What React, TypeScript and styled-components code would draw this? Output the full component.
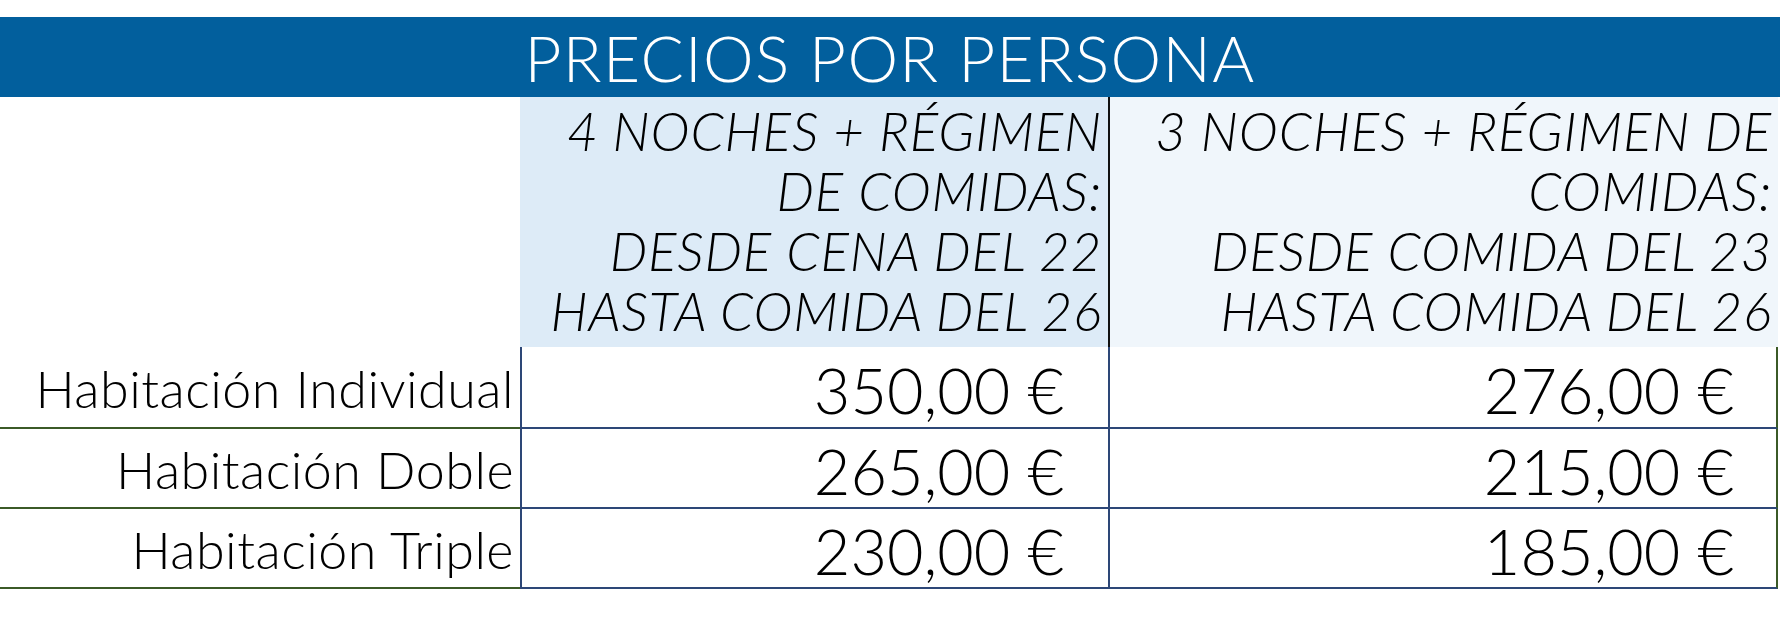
import React from 'react';
import styled, { createGlobalStyle } from 'styled-components';

const GlobalStyle = createGlobalStyle`
  html, body {
    margin: 0;
    padding: 0;
    background: #ffffff;
  }
  body {
    font-family: 'Lato', 'Open Sans', sans-serif;
    color: #000000;
  }
`;

const NAVY = '#2d4777';
const GREEN = '#3b5a27';

const Page = styled.div`
  width: 1780px;
  padding-top: 17px;
`;

const TitleBar = styled.div`
  height: 80px;
  background: #025f9d;
  color: #ffffff;
  display: flex;
  align-items: center;
  justify-content: center;
  font-family: 'Lato', sans-serif;
  font-weight: 300;
  font-size: 64px;
  letter-spacing: 1.3px;
  line-height: 1;
  padding-top: 2px;
  box-sizing: border-box;
`;

const Table = styled.div`
  display: grid;
  width: 1778px;
  grid-template-columns: 520px 590px 668px;
  grid-template-rows: 250px 82px 80px 80px;
`;

const HeaderBlank = styled.div`
  background: #ffffff;
`;

const HeaderCell = styled.div<{ $tone: 'strong' | 'soft'; $divider?: boolean }>`
  background: ${(p) => (p.$tone === 'strong' ? '#ddebf7' : '#f0f6fb')};
  border-right: ${(p) => (p.$divider ? '2px solid #111111' : 'none')};
  box-sizing: border-box;
  padding: 4px 6px 0 0;
  display: flex;
  flex-direction: column;
  align-items: flex-end;
  font-style: italic;
  font-weight: 300;
  font-size: 53px;
  letter-spacing: 0.8px;
  line-height: 60px;
  text-transform: uppercase;
  white-space: nowrap;
`;

const Label = styled.div`
  border-bottom: 2px solid ${GREEN};
  box-sizing: border-box;
  display: flex;
  align-items: center;
  justify-content: flex-end;
  padding: 2px 6px 0 0;
  font-weight: 300;
  font-size: 52px;
  letter-spacing: 0.5px;
  white-space: nowrap;
`;

const Price = styled.div<{ $first?: boolean; $last?: boolean }>`
  border-bottom: 2px solid ${NAVY};
  border-left: ${(p) => (p.$first ? `2px solid ${NAVY}` : 'none')};
  border-right: 2px solid ${(p) => (p.$last ? GREEN : NAVY)};
  box-sizing: border-box;
  display: flex;
  align-items: center;
  justify-content: flex-end;
  padding: 4px ${(p) => (p.$last ? '42px' : '44px')} 0 0;
  font-weight: 300;
  font-size: 63px;
  white-space: nowrap;
`;

const headers = [
  {
    tone: 'strong' as const,
    lines: ['4 noches + régimen', 'de comidas:', 'desde cena del 22', 'hasta comida del 26'],
  },
  {
    tone: 'soft' as const,
    lines: ['3 noches + régimen de', 'comidas:', 'desde comida del 23', 'hasta comida del 26'],
  },
];

const rows = [
  { label: 'Habitación Individual', prices: ['350,00 €', '276,00 €'] },
  { label: 'Habitación Doble', prices: ['265,00 €', '215,00 €'] },
  { label: 'Habitación Triple', prices: ['230,00 €', '185,00 €'] },
];

export default function App() {
  return (
    <>
      <GlobalStyle />
      <Page>
        <TitleBar>PRECIOS POR PERSONA</TitleBar>
        <Table>
          <HeaderBlank />
          {headers.map((h, i) => (
            <HeaderCell key={i} $tone={h.tone} $divider={i === 0}>
              {h.lines.map((line) => (
                <span key={line}>{line}</span>
              ))}
            </HeaderCell>
          ))}
          {rows.map((row) => (
            <React.Fragment key={row.label}>
              <Label>{row.label}</Label>
              <Price $first>{row.prices[0]}</Price>
              <Price $last>{row.prices[1]}</Price>
            </React.Fragment>
          ))}
        </Table>
      </Page>
    </>
  );
}
